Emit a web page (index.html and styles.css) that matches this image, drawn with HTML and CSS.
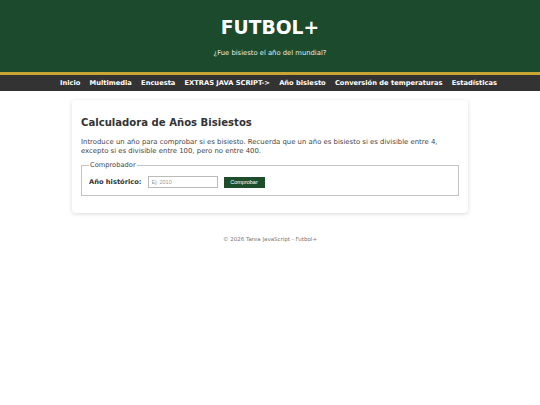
FILE: index.html
```html
<!DOCTYPE html>
<html lang="es">
<head>
<meta charset="utf-8">
<title>Año bisiesto - Futbol+</title>
<link rel="stylesheet" href="styles.css">
</head>
<body>
<header class="site-header">
  <h1 class="brand">FUTBOL+</h1>
  <p class="tagline">¿Fue bisiesto el año del mundial?</p>
</header>
<nav class="main-nav">
  <a href="#">Inicio</a>
  <a href="#">Multimedia</a>
  <a href="#">Encuesta</a>
  <a href="#">EXTRAS JAVA SCRIPT-&gt;</a>
  <a href="#">Año bisiesto</a>
  <a href="#">Conversión de temperaturas</a>
  <a href="#">Estadísticas</a>
</nav>
<main class="content">
  <section class="card">
    <h2 class="card-title">Calculadora de Años Bisiestos</h2>
    <p class="card-text">Introduce un año para comprobar si es bisiesto. Recuerda que un año es bisiesto si es divisible entre 4, excepto si es divisible entre 100, pero no entre 400.</p>
    <fieldset class="checker">
      <legend>Comprobador</legend>
      <div class="checker-row">
        <label for="anio">Año histórico:</label>
        <input id="anio" type="text" placeholder="Ej: 2010">
        <button type="button">Comprobar</button>
      </div>
    </fieldset>
  </section>
</main>
<footer class="site-footer">© 2026 Tarea JavaScript - Futbol+</footer>
</body>
</html>
```
FILE: styles.css
```css
* { box-sizing: border-box; }
body {
  margin: 0;
  background: #ffffff;
  font-family: "DejaVu Sans", Verdana, sans-serif;
  color: #333;
}
.site-header {
  background: #1b4a2c;
  color: #fff;
  text-align: center;
  height: 75px;
  padding-top: 17px;
  border-bottom: 3px solid #c9a534;
}
.brand {
  margin: 0;
  font-size: 18.7px;
  line-height: 22px;
  font-weight: bold;
}
.tagline {
  margin: 10px 0 0;
  font-size: 6.8px;
  line-height: 9px;
  color: #e6ece6;
}
.main-nav {
  background: #333;
  height: 16px;
  display: flex;
  justify-content: center;
  align-items: center;
  gap: 9.2px;
  padding-left: 17px;
}
.main-nav a {
  color: #fff;
  text-decoration: none;
  font-weight: bold;
  font-size: 6.7px;
}
.content {
  padding-top: 9px;
}
.card {
  width: 396px;
  margin: 0 auto;
  background: #fff;
  border-radius: 4px;
  box-shadow: 0 1px 4px rgba(0,0,0,0.15);
  padding: 16px 9px 17px;
}
.card-title {
  margin: 0 0 8px;
  font-size: 10.1px;
  line-height: 14px;
  color: #333;
}
.card-text {
  margin: 0 0 6px;
  font-size: 6.9px;
  line-height: 8.5px;
  color: #444;
}
.checker {
  margin: 0;
  border: 1px solid #c4c4c4;
  padding: 7px 7px 7px;
}
.checker legend {
  font-size: 6.7px;
  padding: 0 1px;
  color: #444;
}
.checker-row {
  display: flex;
  align-items: center;
}
.checker-row label {
  font-weight: bold;
  font-size: 6.7px;
  color: #333;
  margin-right: 6px;
}
.checker-row input {
  width: 70px;
  height: 12px;
  border: 1px solid #bbb;
  font-family: "Liberation Sans", Arial, sans-serif;
  font-size: 5.5px;
  padding: 0 3px;
  margin: 0 6px 0 0;
}
.checker-row input::placeholder { color: #999; }
.checker-row button {
  width: 41px;
  height: 11px;
  border: 0;
  background: #1e4d2b;
  color: #fff;
  font-family: "Liberation Sans", Arial, sans-serif;
  font-size: 5.5px;
  padding: 0;
}
.site-footer {
  text-align: center;
  margin-top: 23px;
  font-size: 5.5px;
  color: #777;
}
```
